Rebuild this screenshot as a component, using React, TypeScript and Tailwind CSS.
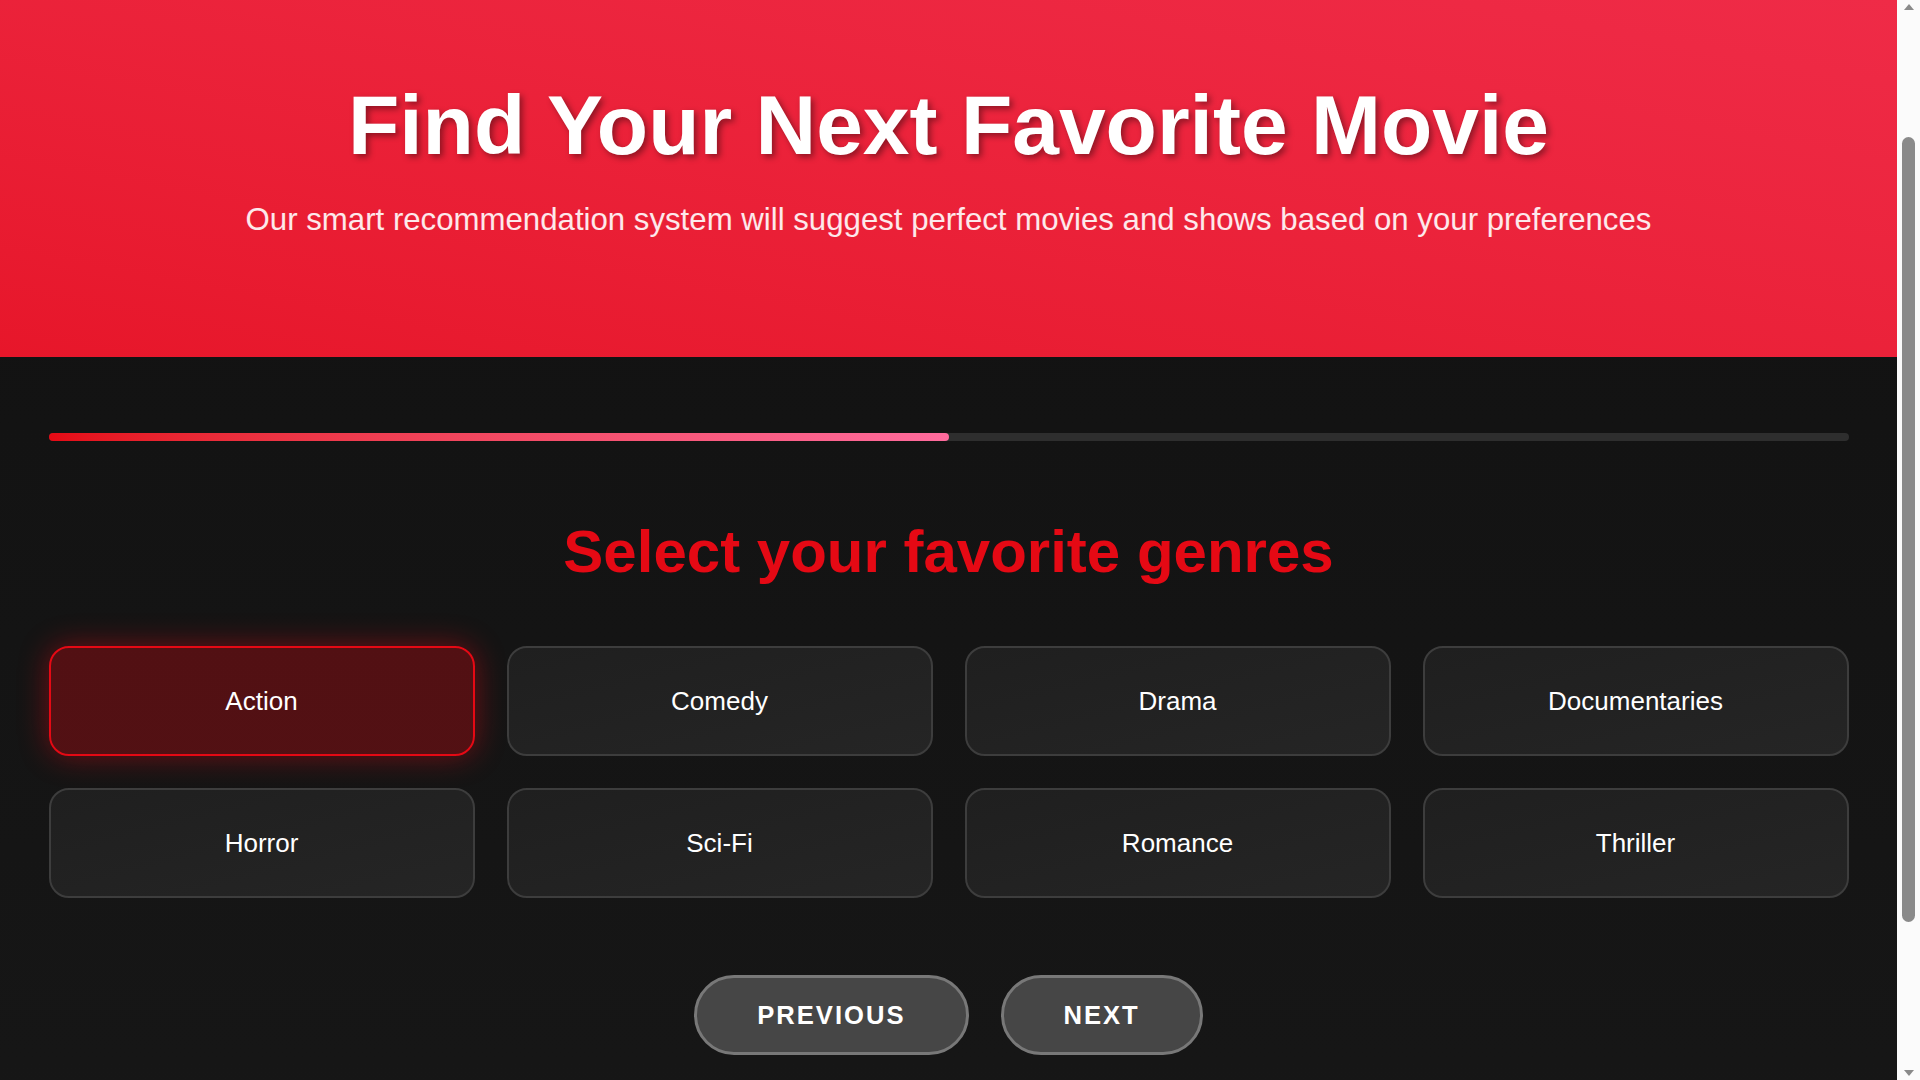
import { useState } from 'react';

const genres = ['Action', 'Comedy', 'Drama', 'Documentaries', 'Horror', 'Sci-Fi', 'Romance', 'Thriller'];

// browser scrollbar as seen in the capture (page is scrolled a bit)
function FakeScrollbar() {
  return (
    <div className="fixed top-0 right-0 flex h-screen w-[23px] flex-col items-center bg-[#fbfbfb]">
      <svg width="10" height="6" viewBox="0 0 10 6" className="mt-[4px]">
        <path d="M5 0 L10 6 L0 6 Z" fill="#8a8a8a" />
      </svg>
      <div className="mt-[127px] h-[785px] w-[13px] rounded-full bg-[#8a8a8a]" />
      <svg width="10" height="6" viewBox="0 0 10 6" className="mt-auto mb-[4px]">
        <path d="M0 0 L10 0 L5 6 Z" fill="#8a8a8a" />
      </svg>
    </div>
  );
}

export default function App() {
  const [selected, setSelected] = useState<string[]>(['Action']);
  const progress = 50;

  const toggle = (g: string) =>
    setSelected((s) => (s.includes(g) ? s.filter((x) => x !== g) : [...s, g]));

  return (
    <div className="min-h-screen bg-[#fbfbfb] font-['Liberation_Sans',Arial,sans-serif] text-white">
      <div className="mr-[23px] min-h-screen bg-gradient-to-b from-[#111111] to-[#171717]">
        {/* hero */}
        <header className="bg-gradient-to-tr from-[#e7162a] to-[#ef2b47] px-8 pt-[77px] pb-[120px] text-center">
          <h1 className="text-[84px] font-bold leading-[96px] [text-shadow:3px_3px_6px_rgba(0,0,0,0.4)]">
            Find Your Next Favorite Movie
          </h1>
          <p className="mt-[30px] text-[31.2px] leading-[34px] text-white/90">
            Our smart recommendation system will suggest perfect movies and shows based on your preferences
          </p>
        </header>

        <main className="mx-auto w-full max-w-[1800px] pt-[76px] pb-[214px]">
          {/* progress */}
          <div className="h-2 w-full rounded-full bg-[#2e2e2e]">
            <div
              className="h-full rounded-full bg-gradient-to-r from-[#e50914] to-[#ff6b9d]"
              style={{ width: `${progress}%` }}
            />
          </div>

          <h2 className="mt-[76px] text-center text-6xl leading-[69px] font-bold text-[#e50914]">
            Select your favorite genres
          </h2>

          <div className="mt-[60px] grid grid-cols-4 gap-8">
            {genres.map((g) => {
              const active = selected.includes(g);
              return (
                <button
                  key={g}
                  onClick={() => toggle(g)}
                  className={
                    active
                      ? 'flex h-[110px] items-center justify-center rounded-[20px] border-2 border-[#e50914] bg-[#e50914]/30 text-[26px] text-white shadow-[0_0_30px_rgba(229,9,20,0.45)]'
                      : 'flex h-[110px] items-center justify-center rounded-[20px] border-2 border-[#3d3d3d] bg-gradient-to-br from-[#1f1f1f] to-[#252525] text-[26px] text-white'
                  }
                >
                  {g}
                </button>
              );
            })}
          </div>

          <div className="mt-[77px] flex justify-center gap-8">
            <button className="h-20 rounded-full border-[3px] border-[#787878] bg-[#464646] px-[60px] text-[1.6rem] font-bold tracking-[2px] uppercase">
              Previous
            </button>
            <button className="h-20 rounded-full border-[3px] border-[#787878] bg-[#464646] px-[60px] text-[1.6rem] font-bold tracking-[2px] uppercase">
              Next
            </button>
          </div>
        </main>
      </div>
      <FakeScrollbar />
    </div>
  );
}
